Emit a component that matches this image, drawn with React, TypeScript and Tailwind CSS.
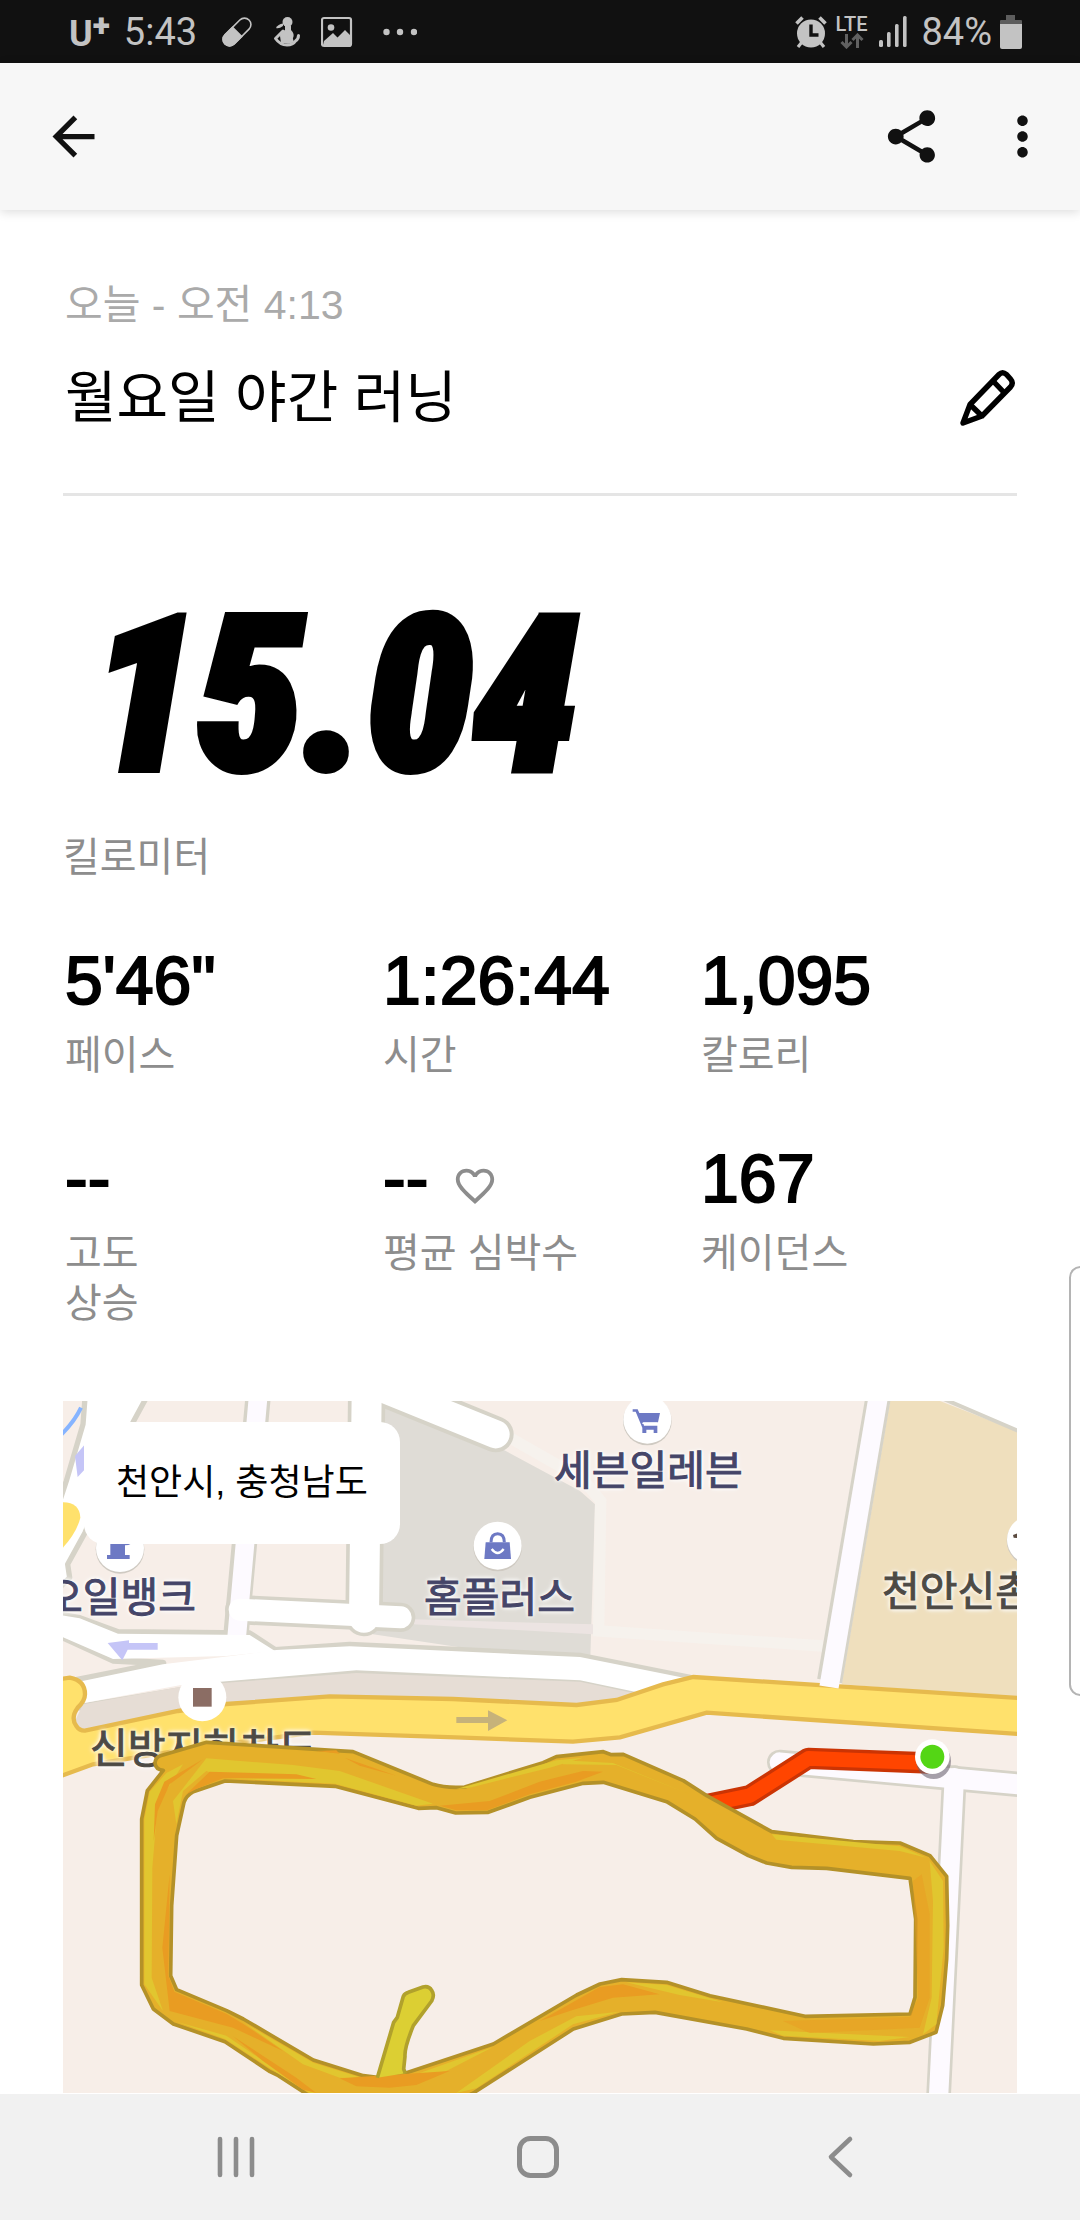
import type { ReactNode } from "react";
import { MdArrowBack, MdFavoriteBorder, MdMoreVert, MdShare } from "react-icons/md";

type StatProps = {
  value: string;
  label: ReactNode;
  icon?: ReactNode;
};

const stats: StatProps[] = [
  { value: "5'46\"", label: "페이스" },
  { value: "1:26:44", label: "시간" },
  { value: "1,095", label: "칼로리" },
  {
    value: "--",
    label: (
      <>
        고도
        <br />
        상승
      </>
    ),
  },
  {
    value: "--",
    label: "평균 심박수",
    icon: <MdFavoriteBorder className="mt-4 size-[46px] text-[#8d8d8d]" />,
  },
  { value: "167", label: "케이던스" },
];

function PillIcon() {
  return (
    <svg className="size-8" viewBox="0 0 32 32" fill="none">
      <g transform="rotate(45 16 16)">
        <rect x="9.5" y="-1" width="13" height="34" rx="6.5" stroke="currentColor" strokeWidth="1.6" />
        <path d="M8.7 15h14.6v11.500a7.300 7.300 0 0 1-14.600 0z" fill="currentColor" />
      </g>
    </svg>
  );
}

function PersonIcon() {
  return (
    <svg className="h-8 w-7" viewBox="0 0 28 32" fill="none">
      <circle cx="14.500" cy="6" r="5" fill="currentColor" />
      <path d="M12 10h6v4q4 4 2 8l-3 5H8l-1-7q0-4 5-6z" fill="currentColor" />
      <path
        d="M10 15L2.500 22.500Q7 29 14 29q6 0 8.500-4 3-2 3-5.500"
        stroke="currentColor"
        strokeWidth="3"
        strokeLinecap="round"
        strokeLinejoin="round"
      />
      <path d="M8 22l3 5q5 2 10-1l-2-6z" fill="currentColor" />
      <path d="M3 12q2-4 7-4.500v2.500q-4 3-7 2z" fill="currentColor" />
    </svg>
  );
}

function PictureIcon() {
  return (
    <svg className="size-8" viewBox="0 0 32 32" fill="none">
      <rect x="1" y="2" width="29" height="28" rx="2" stroke="currentColor" strokeWidth="2.200" />
      <circle cx="10" cy="11.500" r="3.300" fill="currentColor" />
      <path d="M3 25l9-8 4.500 4.500L24 14l6 6v9H2z" fill="currentColor" />
    </svg>
  );
}

function AlarmIcon() {
  return (
    <svg className="size-[34px]" viewBox="0 0 34 34" fill="none">
      <path d="M2.500 8.500l6-6M31.500 8.500l-6-6" stroke="currentColor" strokeWidth="3.600" />
      <path d="M8 27l-4 5M26 27l4 5" stroke="currentColor" strokeWidth="3.200" />
      <circle cx="17" cy="18.500" r="14" fill="currentColor" />
      <path d="M17 9.500v10.500h7.500" stroke="#111111" strokeWidth="3.400" />
    </svg>
  );
}

function DataArrowsIcon() {
  return (
    <svg className="h-4 w-6" viewBox="0 0 24 16" fill="none" stroke="#616161" strokeWidth="3">
      <path d="M6.500 1v12M1.500 9l5 5 5-5M17.500 15V3M12.500 7l5-5 5 5" />
    </svg>
  );
}

function SignalIcon() {
  return (
    <svg className="h-8 w-7" viewBox="0 0 28 32" fill="currentColor">
      <rect x="0" y="24" width="4" height="7" rx="1.500" />
      <rect x="8" y="16" width="3.600" height="15" rx="1.500" />
      <rect x="16" y="8" width="3.600" height="23" rx="1.500" />
      <rect x="24" y="0" width="3.600" height="31" rx="1.500" />
    </svg>
  );
}

function BatteryIcon() {
  return (
    <svg className="h-[34px] w-[22px]" viewBox="0 0 22 34">
      <path d="M6 0h9v5h6q1 0 1 1v4H0V6q0-1 1-1h5z" fill="#5d5d5d" />
      <path d="M0 9h22v23q0 2-2 2H2q-2 0-2-2z" fill="currentColor" />
    </svg>
  );
}

function PencilIcon() {
  return (
    <svg
      className="h-[58px] w-[58px]"
      viewBox="0 0 58 58"
      fill="none"
      stroke="currentColor"
      strokeWidth="5.400"
      strokeLinejoin="round"
    >
      <path d="M4 54l7-18.500L40 5.500q3.500-3.500 7.500 0l4 4.500q3.500 4 0 8L23 47z" />
      <path d="M34 12l11.500 12M11 35.500L23 47" />
    </svg>
  );
}

function StatusBar() {
  return (
    <div className="flex h-[63px] items-center justify-between bg-[#111111] pr-[58px] pl-[69px] font-[Roboto,sans-serif] text-[38px] leading-none text-[#c3c3c3]">
      <div className="flex items-center">
        <span className="flex items-start font-bold">
          <span className="pt-1 text-[36px] leading-none">U</span>
          <span className="text-[32px] leading-[26px] font-black">+</span>
        </span>
        <span className="ml-[14px]">5:43</span>
        <span className="ml-6 flex items-center gap-5">
          <PillIcon />
          <PersonIcon />
          <PictureIcon />
        </span>
        <svg className="ml-[30px] h-2 w-[34px]" viewBox="0 0 34 8" fill="currentColor">
          <circle cx="3.500" cy="4" r="3.200" />
          <circle cx="17" cy="4" r="3.200" />
          <circle cx="31" cy="4" r="3.200" />
        </svg>
      </div>
      <div className="flex items-center">
        <AlarmIcon />
        <span className="ml-2 flex flex-col items-center">
          <span className="text-[20px] leading-[18px] font-medium">LTE</span>
          <DataArrowsIcon />
        </span>
        <span className="ml-3">
          <SignalIcon />
        </span>
        <span className="ml-[14px]">84%</span>
        <span className="ml-2">
          <BatteryIcon />
        </span>
      </div>
    </div>
  );
}

function AppBar() {
  return (
    <header className="z-10 flex h-[147px] items-center justify-between bg-[#f7f7f7] pr-[26px] pl-[42px] text-[#111111] shadow-[0_2px_10px_rgba(0,0,0,0.14)]">
      <button type="button" aria-label="뒤로">
        <MdArrowBack className="size-[63px]" />
      </button>
      <div className="flex items-center gap-12">
        <button type="button" aria-label="공유">
          <MdShare className="size-[63px]" />
        </button>
        <button type="button" aria-label="더보기">
          <MdMoreVert className="size-[63px]" />
        </button>
      </div>
    </header>
  );
}

function Stat({ value, label, icon }: StatProps) {
  return (
    <div className="pl-0.5">
      <div className="mb-4 flex h-[68px] items-center gap-6">
        <span className="text-[68px] leading-none [-webkit-text-stroke:2px_black]">{value}</span>
        {icon}
      </div>
      <p className="text-[40px] leading-[50px] text-[#8d8d8d]">{label}</p>
    </div>
  );
}

function MapBase() {
  return (
    <svg className="absolute inset-0 size-full" viewBox="0 0 2862 2076" fill="none">
      <rect width="2862" height="2076" fill="#f7eee8" />
      {/* building block */}
      <path d="M960 0L1310 140 1551 270 1596 310 1581 800 1200 740 930 700z" fill="#dfdcd6" />
      <path d="M1050 655L1590 670V700L1050 670z" fill="#ece4e2" />
      <path d="M1340 110L1560 235 1613 300 1607 690 2280 735" stroke="#f6f2ed" strokeWidth="34" />
      <path d="M2481 0H2631L2862 90V890L2336 850z" fill="#efdfbd" />
      <path d="M2610-20L2880 96V-20z" fill="#fff" stroke="#d6d3c8" strokeWidth="12" />

      {/* casings */}
      <g stroke="#d6d3c8" strokeLinecap="round" strokeLinejoin="round">
        <path d="M900-62L1298 100" strokeWidth="108" />
        <path d="M586-20L520 690" strokeWidth="76" />
        <path d="M911-20L903 650" strokeWidth="112" />
        <path d="M530 626L1013 649" strokeWidth="88" />
        <path d="M2447-20L2300 840" strokeWidth="76" strokeLinecap="butt" />
        <path d="M2150 1084L2900 1153" strokeWidth="76" />
        <path d="M2674 1130L2626 2100" strokeWidth="74" />
        <path
          d="M66-10L60 70 10 240-10 300V560L20 530 14 490 66 395 210 64 250-10z"
          strokeWidth="16"
          fill="#fff"
        />
        <path d="M-20 640L50 652 165 694 560 698 636 748 860 732 1551 765 1881 831 1751 884 1551 842 880 812 490 845-20 930V850L300 786 150 778-20 700z" strokeWidth="20" />
      </g>

      {/* verge between the two carriageways */}
      <path d="M60 910L350 858 490 845 880 816 1551 842 1751 884 1660 900 1541 912 800 890 490 912 60 992 36 960z" fill="#e6ddd5" />

      {/* fills */}
      <g stroke="#fff" strokeLinecap="round" strokeLinejoin="round">
        <path d="M900-62L1298 100" strokeWidth="84" />
        <path d="M586-20L520 720" strokeWidth="56" stroke="#fdfaff" />
        <path d="M911-20L903 650" strokeWidth="90" />
        <path d="M530 626L1013 649" strokeWidth="66" />
        <path d="M2150 1084L2900 1153" strokeWidth="60" stroke="#fdfaff" />
        <path d="M2674 1130L2626 2100" strokeWidth="58" stroke="#fdfaff" />
      </g>
      <path d="M-20 640L50 652 165 698 560 702 636 750 490 765 150 774-20 700z" fill="#fff" />
      <path d="M30 846L300 790 510 764 640 747 860 736 1551 768 1881 834V858L1751 880 1551 838 880 808 490 841 350 853 30 912z" fill="#fff" />

      {/* main yellow road */}
      <path
        d="M-20 836L20 830Q66 838 66 880 66 900 44 920 22 950 40 975 50 990 66 989L345 930 490 909 800 886 1170 894 1541 912 1661 897 1800 850 1891 828 2880 892V1000L1931 935 1671 1009 1530 1022 1200 1010 750 995 400 1040 90 1090-20 1130z"
        fill="#ffe16c"
        stroke="#e6ba4d"
        strokeWidth="13"
      />
      <path d="M2447-20L2298 858" stroke="#fdfaff" strokeWidth="58" />
      <path d="M-10 304Q50 300 52 350 40 400-10 450z" fill="#ffe16c" />

      <path d="M54 20Q36 60-8 104" stroke="#86b4ff" strokeWidth="12" />
      <path d="M36 165L66 130V205L44 228z" fill="#c5c5f7" />
      <path d="M134 726L198 718V726H284V746H194L178 778z" fill="#c5c5f7" />
      <path d="M1180 948H1275V928L1333 958 1275 990V966H1180z" fill="#c6b27a" />

      {/* place pins */}
      <g fill="#cfcac2">
        <circle cx="171" cy="445" r="73" />
        <circle cx="1304" cy="438" r="73" />
        <circle cx="1753" cy="60" r="73" />
        <circle cx="2904" cy="420" r="73" />
      </g>
      <g fill="#fff">
        <circle cx="171" cy="441" r="72" />
        <circle cx="1304" cy="434" r="72" />
        <circle cx="1753" cy="56" r="72" />
        <circle cx="418" cy="889" r="72" />
        <circle cx="2904" cy="416" r="72" />
      </g>
      <rect x="390" y="861" width="56" height="56" fill="#8b6d64" />
      <path d="M2850 402l22-8v18l-20-2z" fill="#5b4b40" />
      <g fill="#6d79c4">
        <path d="M142 400H186V462H200V474H132V462H142z" />
        <path d="M186 430Q206 430 206 410V396" fill="none" stroke="#6d79c4" strokeWidth="6" />
        <path d="M1268 424H1340L1344 474H1264z" />
        <path d="M1284 424Q1284 398 1304 398 1324 398 1324 424" fill="none" stroke="#6d79c4" strokeWidth="9" />
        <path d="M1286 444Q1304 468 1322 444" fill="none" stroke="#fff" strokeWidth="7" />
        <path d="M1709 25H1724L1729 36H1791L1785 64H1740L1743 74H1783V96H1772V86H1750V96H1738V80L1718 32H1709z" />
        <path d="M1738 67H1782" stroke="#fff" strokeWidth="4" />
      </g>
    </svg>
  );
}

function MapRoute() {
  return (
    <svg className="absolute inset-0 size-full" viewBox="0 0 2862 2076" fill="none" strokeLinejoin="round">
      <path d="M1930 1211L2060 1184 2236 1072 2600 1086" stroke="#cb3404" strokeWidth="64" />
      <path d="M1930 1211L2060 1184 2236 1072 2600 1086" stroke="#ff4500" strokeWidth="44" />
      <path
        fillRule="evenodd"
        d="M276 1086Q278 1068 292 1064L431 1024 820 1049 870 1052 1110 1150Q1150 1162 1205 1158L1440 1085 1480 1067 1621 1052 1645 1061 1681 1060 1861 1139 1931 1184 2126 1292 2371 1322 2511 1326 2601 1364 2651 1426 2654 1574 2651 1674 2639 1814 2619 1894 2541 1924 2431 1929 2161 1912 2051 1884 1776 1834 1676 1839 1531 1884 1231 2076 1120 2130H810L726 2076 646 2024 621 2012 486 1922 331 1869 271 1824 236 1752V1254L253 1169 301 1108Q278 1106 276 1086zM486 1140L816 1156 1066 1222 1121 1220 1178 1236 1276 1234 1401 1189 1561 1147 1621 1144 1811 1202 1896 1254 1961 1312 2056 1364 2111 1386 2186 1399 2291 1402 2541 1432 2558 1554 2556 1789 2541 1839 2226 1846 1941 1784 1811 1744 1676 1736 1611 1749 1541 1782 1291 1929 1026 2017 943 2029 901 2024 751 1977 541 1854 491 1829 341 1766 323 1724 326 1514 341 1304 363 1204Q370 1184 391 1172z"
        fill="#e5b02a"
        stroke="#b49128"
        strokeWidth="11"
      />
      {/* faster and slower laps show through the line */}
      <g fill="#e1c62f">
        <path d="M430 1072L690 1092 830 1110 1110 1208 1060 1214 816 1148 490 1132 430 1110 360 1170 340 1270 330 1200z" />
        <path d="M244 1254L260 1172 310 1116 360 1090 284 1210 268 1400 266 1730 300 1830 244 1750z" />
        <path d="M1180 1164L1480 1078 1560 1070 1460 1100 1220 1160z" />
        <path d="M1500 1078L1650 1086 1880 1180 1660 1092 1500 1090z" />
        <path d="M2126 1300L2511 1336 2590 1370 2510 1350 2140 1316z" />
        <path d="M2600 1380L2640 1440 2642 1640 2620 1870 2580 1900 2606 1790 2610 1500z" />
        <path d="M1690 1744L1811 1752 1980 1804 1850 1782z" />
        <path d="M2120 1888L2540 1908 2450 1920 2160 1904z" />
        <path d="M340 1862L490 1904 660 2020 760 2076H740L620 2002 486 1914z" />
        <path d="M541 1864L751 1985 900 2032 1030 2030 1290 1938 1150 2010 1020 2040 830 2030 720 1990z" />
        <path d="M1240 2062L1530 1870 1670 1832 1540 1846 1400 1920 1180 2076z" />
      </g>
      <g fill="#e99c22">
        <path d="M440 1112L700 1120 760 1134 480 1132 400 1164 370 1180z" />
        <path d="M420 1075L320 1150 284 1230 272 1320 276 1210 304 1142z" />
        <path d="M760 1050L820 1048 830 1058zM845 1070L1000 1124 890 1094z" />
        <path d="M1130 1214L1280 1200 1430 1142 1560 1110 1620 1112 1540 1142 1400 1180 1272 1228 1180 1228z" />
        <path d="M320 1420L316 1724 334 1772 490 1838 540 1868 660 1950 510 1880 320 1830 298 1640z" />
        <path d="M510 1906L700 2030 760 2076 720 2066 600 1980z" />
        <path d="M830 2032L1160 2010 1060 2052 980 2060 880 2056z" />
        <path d="M1430 1860L1610 1758 1680 1750 1790 1780 1650 1790 1520 1830z" />
        <path d="M2550 1440L2576 1420 2600 1540V1790L2570 1880 2240 1896 2160 1860 2540 1848 2566 1789z" opacity="0.5" />
      </g>
      <path
        d="M943 2030L992 1864 1003 1849 1021 1786Q1026 1776 1036 1774L1080 1758Q1098 1754 1106 1768 1116 1782 1106 1800L1051 1874Q1024 1940 1026 1966L1022 2004 1027 2017"
        fill="#dccf33"
        stroke="#b1a12c"
        strokeWidth="11"
      />
      <ellipse cx="2612" cy="1080" rx="52" ry="54" fill="#6b6270" opacity="0.6" />
      <circle cx="2608" cy="1067" r="52" fill="#fff" />
      <circle cx="2608" cy="1067" r="36" fill="#54d615" />
    </svg>
  );
}

function RunMap() {
  return (
    <section
      aria-label="지도"
      className="relative mx-[63px] aspect-[954/692] overflow-hidden text-[41px] leading-[50px] whitespace-nowrap text-[#454568] [-webkit-text-stroke-width:1px] [text-shadow:0_0_4px_#fff,0_0_4px_#fff,0_0_6px_#fff]"
    >
      <MapBase />
      <span className="absolute top-[45px] left-[491px]">세븐일레븐</span>
      <span className="absolute top-[172px] left-[361px]">홈플러스</span>
      <span className="absolute top-[172px] left-[-18px]">오일뱅크</span>
      <span className="absolute top-[166px] left-[819px] text-[#4d4a45]">천안신촌</span>
      <span className="absolute top-[323px] left-[27px] text-[#4d4a45]">신방지하차도</span>
      <MapRoute />
      <p className="absolute top-[21px] left-[21px] rounded-[20px] bg-white px-8 py-9 text-[36px] text-black [-webkit-text-stroke-width:0px] [text-shadow:none]">
        천안시, 충청남도
      </p>
    </section>
  );
}

function NavBar() {
  return (
    <nav className="mt-auto grid h-[126px] grid-cols-3 items-center justify-items-center bg-[#f1f1f1] pr-[89px] pl-[85px] text-[#8c8c8c]">
      <button type="button" aria-label="최근 앱">
        <svg className="size-11" viewBox="0 0 44 44" stroke="currentColor" strokeWidth="4.600" strokeLinecap="round">
          <path d="M6 4v36M22 4v36M38 4v36" />
        </svg>
      </button>
      <button type="button" aria-label="홈">
        <svg className="size-11" viewBox="0 0 44 44" fill="none" stroke="currentColor" strokeWidth="5">
          <rect x="3.500" y="3.500" width="37" height="37" rx="11" />
        </svg>
      </button>
      <button type="button" aria-label="이전">
        <svg
          className="size-11"
          viewBox="0 0 44 44"
          fill="none"
          stroke="currentColor"
          strokeWidth="4.600"
          strokeLinecap="round"
          strokeLinejoin="round"
        >
          <path d="M32 4L13 22l19 18" />
        </svg>
      </button>
    </nav>
  );
}

export default function App() {
  return (
    <div className="relative flex min-h-screen flex-col overflow-hidden bg-white font-['Liberation_Sans','Noto_Sans_CJK_KR',sans-serif] text-black">
      <StatusBar />
      <AppBar />
      <main>
        <div className="px-[63px] pt-[70px]">
          <p className="pl-0.5 text-[41px] leading-[50px] text-[#aaaaaa]">오늘 - 오전 4:13</p>
          <div className="mt-[26px] flex items-center justify-between border-b-[3px] border-[#e5e5e5] pb-[53px]">
            <h1 className="pl-0.5 text-[56px] leading-[84px]">월요일 야간 러닝</h1>
            <button type="button" aria-label="이름 편집">
              <PencilIcon />
            </button>
          </div>
          <p className="mt-20 pl-7 font-['Roboto_Condensed',Roboto,sans-serif] text-[214px] leading-[240px] font-black italic [-webkit-text-stroke:8px_black]">
            15.04
          </p>
          <p className="mt-4 text-[40px] leading-[50px] text-[#8d8d8d]">킬로미터</p>
          <div className="mt-16 grid grid-cols-3 gap-y-16">
            {stats.map((stat, index) => (
              <Stat key={index} {...stat} />
            ))}
          </div>
        </div>
        <div className="pt-[73px]">
          <RunMap />
        </div>
      </main>
      <NavBar />
      {/* edge panel handle */}
      <div className="absolute top-[1266px] -right-3 h-[430px] w-[23px] rounded-[20px] border-2 border-[#b4b4b4] bg-white" />
    </div>
  );
}
